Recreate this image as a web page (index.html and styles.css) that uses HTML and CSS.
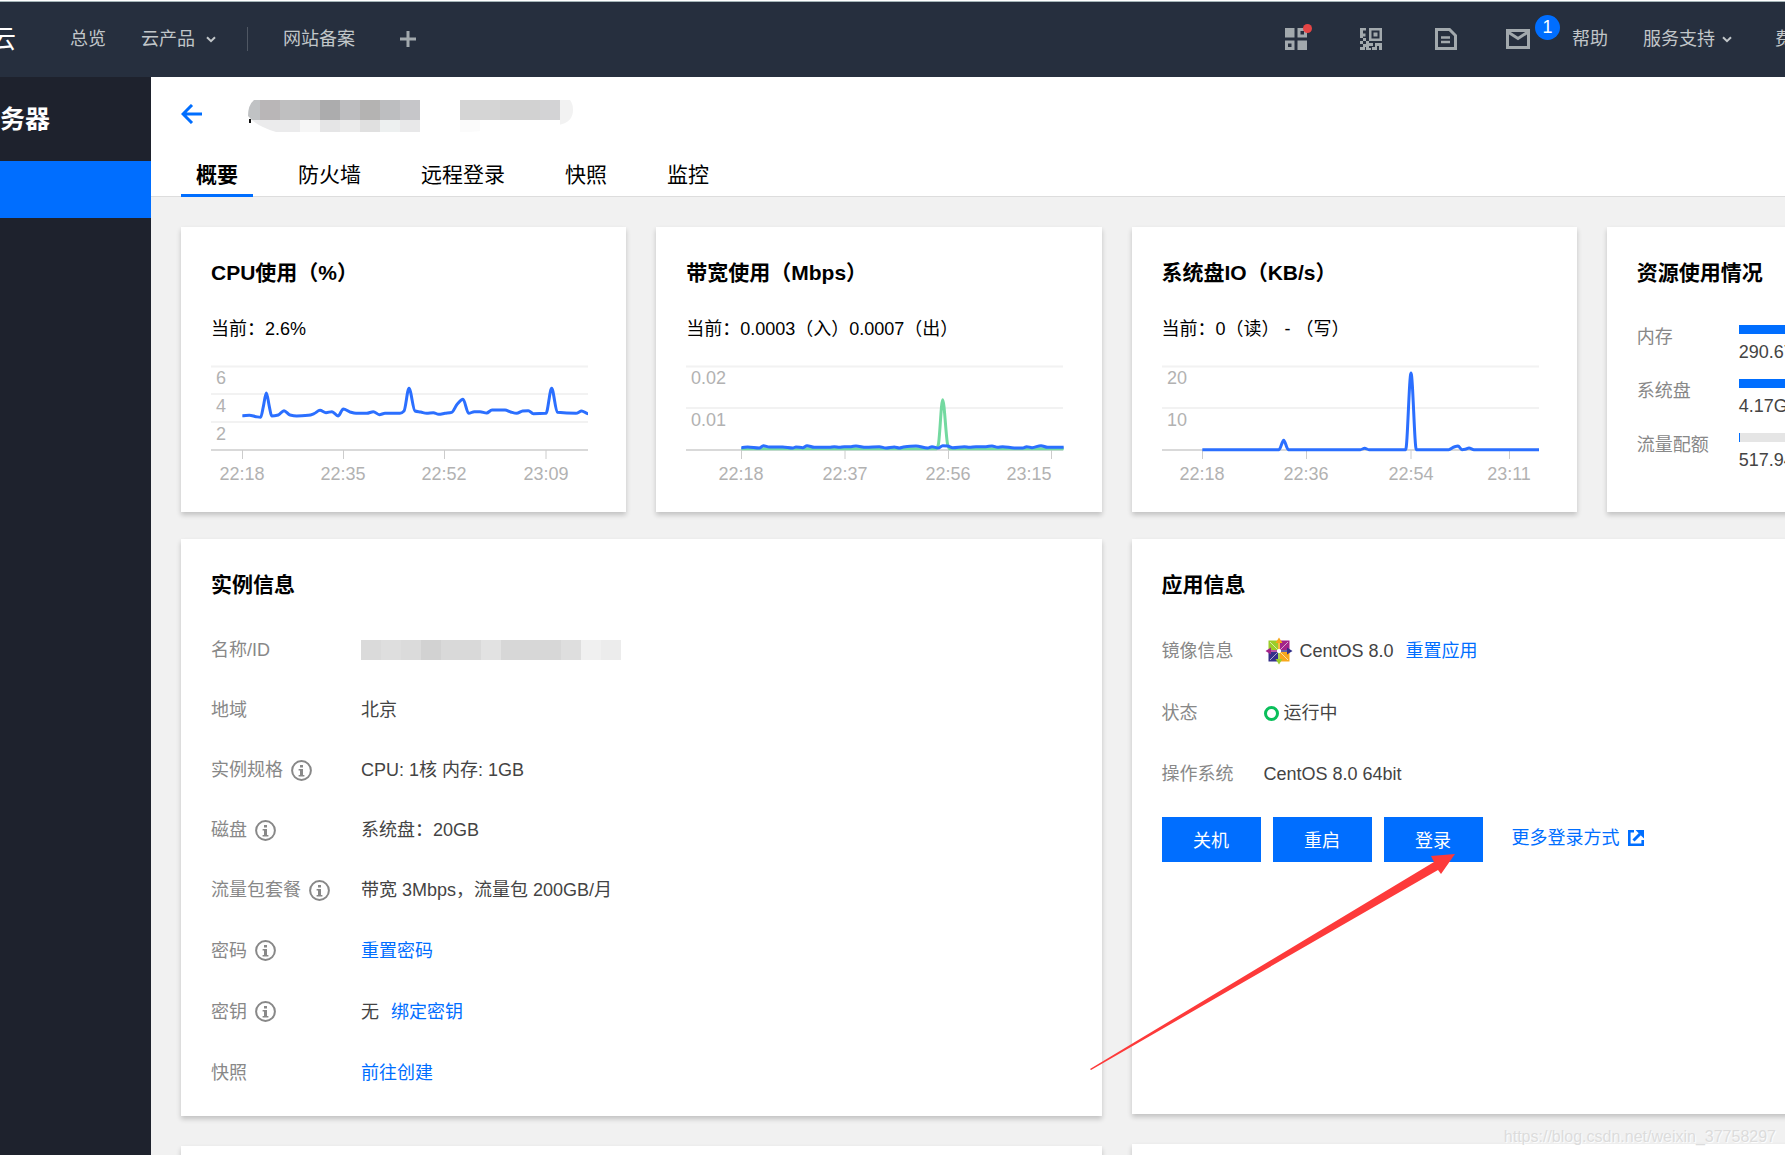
FILE: index.html
```html
<!DOCTYPE html>
<html lang="zh-CN">
<head>
<meta charset="utf-8">
<title>云服务器 - 概要</title>
<link rel="stylesheet" href="styles.css">
</head>
<body>
<svg class="defs" width="0" height="0" aria-hidden="true">
  <symbol id="info" viewBox="0 0 21 21">
    <circle cx="10.5" cy="10.5" r="9.4" fill="none" stroke="currentColor" stroke-width="2"/>
    <path d="M9 5h3v2.6H9zM7.6 9H12v6h1.4v1.6H7.6V15H9v-4.4H7.6z" fill="currentColor"/>
  </symbol>
  <symbol id="chevron" viewBox="0 0 10 7">
    <path d="M1 1.2l4 4 4-4" fill="none" stroke="currentColor" stroke-width="2"/>
  </symbol>
</svg>

<header class="topbar">
  <a class="brand" href="#">云</a>
  <nav class="nav-left">
    <a href="#">总览</a>
    <a class="with-chevron products" href="#">云产品<svg width="10" height="7"><use href="#chevron"/></svg></a>
    <span class="divider"></span>
    <a href="#">网站备案</a>
    <button class="add" type="button" aria-label="添加"><svg width="16" height="16" viewBox="0 0 16 16"><path d="M8 0v16M0 8h16" stroke="currentColor" stroke-width="3"/></svg></button>
  </nav>
  <nav class="nav-right">
    <button class="tool" type="button" aria-label="应用">
      <svg width="22" height="22" viewBox="0 0 22 22" fill="currentColor"><path fill-rule="evenodd" d="M0 0h9.500v9.500H0zM12.500 0H22v9.500h-9.500zM15.500 3v3.500H19V3zM0 12.500h9.500V22H0zM3 15.500V19h3.500v-3.500zM12.500 12.500H22V22h-9.500z"/></svg>
      <span class="dot"></span>
    </button>
    <button class="tool" type="button" aria-label="二维码">
      <svg width="22" height="22" viewBox="0 0 22 22" fill="currentColor"><path fill-rule="evenodd" d="M9 0h13v13H9zM11.500 2.500v8h8v-8zM13.500 4.500h4v4h-4zM0 0h6v2.500H3v3h2.500v3H3V10H0zM3 10h3v3H3zM0 13h3v3H0zM6 13h3v3H6zM3 16h6v-1h4v3H9v2h2v2H6v-3H5v3H0v-3h3zM15 15h7v7h-3v-4h-2v4h-5v-3h3z"/></svg>
    </button>
    <button class="tool" type="button" aria-label="文档">
      <svg width="22" height="22" viewBox="0 0 22 22" fill="none" stroke="currentColor" stroke-width="3"><path d="M1.500 1.500h13l6 6v13h-19z"/><path d="M6 9.500h9M6 14h9" stroke-width="2.600"/></svg>
    </button>
    <button class="tool mail" type="button" aria-label="消息">
      <svg width="24" height="20" viewBox="0 0 24 20" fill="none" stroke="currentColor" stroke-width="3"><path d="M1.500 1.500h21v17h-21z"/><path d="M2 3l10 6.500L22 3"/></svg>
      <span class="badge">1</span>
    </button>
    <a class="help" href="#">帮助</a>
    <a class="with-chevron support" href="#">服务支持<svg width="10" height="7"><use href="#chevron"/></svg></a>
    <a href="#">费用</a>
  </nav>
</header>

<div class="layout">
  <aside class="sidebar">
    <h1 class="sidebar-title">务器</h1>
    <a class="sidebar-item" href="#" aria-label="服务器"></a>
  </aside>

  <main class="main">
    <div class="page-head">
      <div class="crumb">
        <a class="back" href="#" aria-label="返回"><svg width="22" height="20" viewBox="0 0 22 20" fill="none" stroke="currentColor" stroke-width="3"><path d="M21 10H3M11 1l-9 9 9 9"/></svg></a>
        <svg class="mask" width="325" height="32" viewBox="0 0 325 32" aria-hidden="true">
          <defs>
            <clipPath id="m1"><path d="M6 0h166v32H28Q8 26 0 16 0 5 6 0z"/></clipPath>
            <clipPath id="m2"><path d="M212 0h110q3 4 3 10 0 12-14 15l-90 7h-9z"/></clipPath>
          </defs>
          <path d="M1 19h2v4H1z" fill="#111"/>
          <g clip-path="url(#m1)">
            <path d="M0 0h12v20H0z" fill="#c0c2c4"/><path d="M12 0h20v20H12z" fill="#b9b6b7"/><path d="M32 0h20v20H32z" fill="#bfbfc0"/><path d="M52 0h20v20H52z" fill="#bdbdbe"/><path d="M72 0h20v20H72z" fill="#acacad"/><path d="M92 0h20v20H92z" fill="#bebec0"/><path d="M112 0h20v20h-20z" fill="#b4b3b2"/><path d="M132 0h20v20h-20z" fill="#bdbec0"/><path d="M152 0h20v20h-20z" fill="#c6c6c9"/>
            <path d="M0 20h52v12H0z" fill="#ebebec"/><path d="M52 20h20v12H52z" fill="#f6f6f6"/><path d="M72 20h20v12H72z" fill="#e5e5e6"/><path d="M92 20h20v12H92z" fill="#ebebeb"/><path d="M112 20h20v12h-20z" fill="#e0e0e0"/><path d="M132 20h20v12h-20z" fill="#edf0f0"/><path d="M152 20h20v12h-20z" fill="#e8e8e9"/>
          </g>
          <g clip-path="url(#m2)">
            <path d="M212 0h40v20h-40z" fill="#d5d5d5"/><path d="M252 0h40v20h-40z" fill="#d2d2d2"/><path d="M292 0h20v20h-20z" fill="#d3d3d5"/><path d="M312 0h13v32h-13z" fill="#f2f2f2"/><path d="M212 20h20v12h-20z" fill="#fbfbfb"/>
          </g>
        </svg>
      </div>
      <nav class="tabs">
        <a class="tab active" href="#">概要</a>
        <a class="tab" href="#">防火墙</a>
        <a class="tab" href="#">远程登录</a>
        <a class="tab" href="#">快照</a>
        <a class="tab" href="#">监控</a>
      </nav>
    </div>

    <div class="content">
      <div class="metrics">
        <section class="card">
          <h2>CPU使用（%）</h2>
          <p class="current">当前：2.6%</p>
          <svg class="chart" width="377" height="130" viewBox="0 0 377 130">
            <path class="grid" d="M0 8.500h377M0 36h377M0 64h377"/>
            <path class="axis" d="M0 92h377"/>
            <path class="tick" d="M31.500 92v9M132.500 92v9M233.500 92v9M335 92v9"/>
            <path class="line" data-points="94,173 115,172 135,176 149,178 157,146 166,105 175,146 182,174 202,171 219,158 237,171 257,174 292,172 309,167 327,157 345,164 363,161 381,174 397,153 417,162 435,166 467,166 487,161 505,170 522,166 567,166 579,159 594,91 612,159 629,162 647,166 667,164 683,169 702,166 722,163 739,138 756,124 773,166 790,161 807,161 827,165 843,156 882,156 899,162 917,166 935,159 952,158 967,167 1005,166 1022,91 1039,163 1095,166 1112,159 1131,167"/>
            <g class="ylabel"><text x="5" y="26">6</text><text x="5" y="54">4</text><text x="5" y="82">2</text></g>
            <g class="xlabel"><text x="31" y="122">22:18</text><text x="132" y="122">22:35</text><text x="233" y="122">22:52</text><text x="335" y="122">23:09</text></g>
          </svg>
        </section>

        <section class="card">
          <h2>带宽使用（Mbps）</h2>
          <p class="current">当前：0.0003（入）0.0007（出）</p>
          <svg class="chart" width="377" height="130" viewBox="0 0 377 130">
            <path class="grid" d="M0 8.500h377M0 50h377"/>
            <path class="axis" d="M0 92h377"/>
            <path class="tick" d="M55.500 92v9M159 92v9M262.500 92v9M365.500 92v9"/>
            <path class="line green" data-points="166,272 752,272 757,260 770,125 785,260 790,272 1133,272"/>
            <path class="line" data-points="166,269 185,267 220,270 232,263 250,267 290,267 320,270 330,267 350,269 363,263 385,268 430,268 445,266 460,268 475,266 495,266 510,264 540,268 580,266 600,270 625,267 640,270 652,267 690,264 725,270 738,266 757,270 770,263 785,264 800,269 835,266 850,268 870,266 900,266 918,264 935,268 950,266 985,270 1010,270 1022,266 1038,269 1065,263 1085,268 1133,268"/>
            <g class="ylabel"><text x="5" y="26">0.02</text><text x="5" y="68">0.01</text></g>
            <g class="xlabel"><text x="55" y="122">22:18</text><text x="159" y="122">22:37</text><text x="262" y="122">22:56</text><text x="343" y="122">23:15</text></g>
          </svg>
        </section>

        <section class="card">
          <h2>系统盘IO（KB/s）</h2>
          <p class="current">当前：0（读） - （写）</p>
          <svg class="chart" width="377" height="130" viewBox="0 0 377 130">
            <path class="grid" d="M0 8.500h377M0 50h377"/>
            <path class="axis" d="M0 92h377"/>
            <path class="tick" d="M40.500 92v9M144.500 92v9M249 92v9M347.500 92v9"/>
            <path class="line" data-points="121,275 351,275 365,247 379,275 595,275 608,271 621,275 731,275 747,45 763,275 860,275 876,267 888,264 900,275 910,274 921,270 936,275 1131,275"/>
            <g class="ylabel"><text x="5" y="26">20</text><text x="5" y="68">10</text></g>
            <g class="xlabel"><text x="40" y="122">22:18</text><text x="144" y="122">22:36</text><text x="249" y="122">22:54</text><text x="347" y="122">23:11</text></g>
          </svg>
        </section>

        <section class="card">
          <h2>资源使用情况</h2>
          <dl class="usage">
            <dt>内存</dt><dd><div class="bar"><div class="fill" style="width:35%"></div></div>290.67MB</dd>
            <dt>系统盘</dt><dd><div class="bar"><div class="fill" style="width:21%"></div></div>4.17GB</dd>
            <dt>流量配额</dt><dd><div class="bar"><div class="fill" style="width:0.3%"></div></div>517.94MB</dd>
          </dl>
        </section>
      </div>

      <div class="details">
        <div class="column">
          <section class="card">
            <h2>实例信息</h2>
            <dl class="rows instance">
              <div class="row"><dt>名称/ID</dt><dd>
                <svg class="mask-id" width="260" height="20" viewBox="0 0 260 20" aria-hidden="true"><path d="M0 0h20v20H0z" fill="#dadada"/><path d="M20 0h20v20H20z" fill="#dedede"/><path d="M40 0h20v20H40z" fill="#dbdbdb"/><path d="M60 0h20v20H60z" fill="#d2d2d2"/><path d="M80 0h40v20H80z" fill="#d9d9d9"/><path d="M120 0h20v20h-20z" fill="#e2e2e2"/><path d="M140 0h60v20h-60z" fill="#d7d7d7"/><path d="M200 0h20v20h-20z" fill="#dedede"/><path d="M220 0h20v20h-20z" fill="#f0f0f0"/><path d="M240 0h20v20h-20z" fill="#ececec"/></svg></dd></div>
              <div class="row"><dt>地域</dt><dd>北京</dd></div>
              <div class="row"><dt>实例规格<svg width="21" height="21"><use href="#info"/></svg></dt><dd>CPU: 1核 内存: 1GB</dd></div>
              <div class="row"><dt>磁盘<svg width="21" height="21"><use href="#info"/></svg></dt><dd>系统盘：20GB</dd></div>
              <div class="row"><dt>流量包套餐<svg width="21" height="21"><use href="#info"/></svg></dt><dd>带宽 3Mbps，流量包 200GB/月</dd></div>
              <div class="row linked"><dt>密码<svg width="21" height="21"><use href="#info"/></svg></dt><dd><a href="#">重置密码</a></dd></div>
              <div class="row linked"><dt>密钥<svg width="21" height="21"><use href="#info"/></svg></dt><dd>无<a href="#">绑定密钥</a></dd></div>
              <div class="row linked"><dt>快照</dt><dd><a href="#">前往创建</a></dd></div>
            </dl>
          </section>
          <section class="card next"></section>
        </div>

        <div class="column">
          <section class="card app">
            <h2>应用信息</h2>
            <dl class="rows application">
              <div class="row"><dt>镜像信息</dt><dd>
                <svg class="centos" width="30" height="28" viewBox="-15 -14 30 28" aria-hidden="true">
                  <path d="M-10.500-10.500H-1V-1H-10.500z" fill="#9ccd2a"/><path d="M1-10.500H10.500V-1H1z" fill="#a3238a"/><path d="M-10.500 1H-1V10.500H-10.500z" fill="#34318a"/><path d="M1 1H10.500V10.500H1z" fill="#f8a81c"/>
                  <path d="M-9-9L9 9M9-9L-9 9" fill="none" stroke="#fff" stroke-width="1" opacity=".6"/>
                  <path d="M-.8-2v-6H-3.500L0-13.500 3.500-8H.8v6z" fill="#f8a81c"/><path d="M2-.8h6V-3.500L13.500 0 8 3.500V.8H2z" fill="#34318a"/><path d="M-.8 2v6H-3.500L0 13.500 3.500 8H.8V2z" fill="#9ccd2a"/><path d="M-2-.8h-6V-3.500L-13.500 0-8 3.500V.8h6z" fill="#a3238a"/>
                </svg><span class="image-name">CentOS 8.0</span><a href="#">重置应用</a></dd></div>
              <div class="row"><dt>状态</dt><dd><span class="ring"></span>运行中</dd></div>
              <div class="row"><dt>操作系统</dt><dd>CentOS 8.0 64bit</dd></div>
            </dl>
            <div class="actions">
              <button type="button">关机</button>
              <button type="button">重启</button>
              <button type="button">登录</button>
              <a class="more" href="#">更多登录方式<svg width="16" height="16" viewBox="0 0 16 16" fill="none" stroke="currentColor" stroke-width="2.600"><path d="M6 1.300H1.300v13.400h13.400V10"/><path d="M5.500 10.500L12 4" stroke-width="3"/><path d="M7.500 0H16v8.500z" fill="currentColor" stroke="none"/></svg></a>
            </div>
            <svg class="pointer" width="366" height="216" viewBox="0 0 366 216" aria-hidden="true"><path d="M0 215L344 8 341 2 365 0 351 20 348 16 1 216z" fill="#fd3a3a"/></svg>
          </section>
          <section class="card next"></section>
        </div>
      </div>
    </div>
  </main>
</div>
<div class="watermark">https://blog.csdn.net/weixin_37758297</div>
<script src="charts.js"></script>
</body>
</html>
```

FILE: styles.css
```css
* { box-sizing: border-box; }

body {
  margin: 0;
  height: 100vh;
  display: flex;
  flex-direction: column;
  overflow: hidden;
  background: #f1f1f1;
  color: #444;
  font: 18px/24px "Liberation Sans", "Noto Sans CJK SC", sans-serif;
}

h1, h2, p, dl, dd { margin: 0; }
a { color: #006eff; text-decoration: none; white-space: nowrap; }
button { border: 0; padding: 0; font: inherit; background: none; cursor: pointer; }
svg { display: block; flex: none; }
.defs { position: absolute; }

/* top bar */
.topbar {
  flex: none;
  height: 77px;
  display: flex;
  align-items: center;
  border-top: 1px solid #fff;
  box-shadow: inset 0 1px #a5b5b8;
  background: #262f3e;
  color: #a2a9ad;
}
.topbar a { color: #c1c6c9; }
.topbar .brand {
  width: 16px;
  margin-right: 54px;
  display: flex;
  justify-content: flex-end;
  overflow: hidden;
  color: #fff;
  font-size: 26px;
  line-height: 32px;
}
.nav-left, .nav-right, .with-chevron { display: flex; align-items: center; }
.nav-left { gap: 35px; }
.products { gap: 11px; }
.products + .divider { margin-left: -4px; }
.divider { width: 1px; height: 24px; background: #4f5763; }
.add { margin-left: 10px; color: #a2a9ad; }
.nav-right { margin-left: auto; margin-right: -26px; }
.tool { position: relative; color: #a2a9ad; margin-right: 53px; }
.tool.mail { margin: 0 42px 0 -4px; }
.dot {
  position: absolute;
  top: -4px;
  right: -5px;
  width: 9px;
  height: 9px;
  border-radius: 50%;
  background: #e54545;
}
.badge {
  position: absolute;
  top: -14px;
  left: 29px;
  width: 25px;
  height: 25px;
  border-radius: 50%;
  background: #006eff;
  color: #fff;
  line-height: 24px;
}
.help { margin-right: 35px; }
.support { gap: 7px; margin-right: 43px; }

/* frame */
.layout { flex: 1; min-height: 0; display: flex; }
.sidebar { flex: none; width: 151px; background: #1e222d; }
.sidebar-title {
  height: 84px;
  overflow: hidden;
  color: #fff;
  font-size: 25px;
  line-height: 84px;
}
.sidebar-item { display: block; height: 57px; background: #006eff; }
.main { flex: 1; min-width: 0; overflow: hidden; }

.page-head {
  padding: 23px 30px 0;
  background: #fff;
  border-bottom: 1px solid #ddd;
}
.crumb { height: 32px; display: flex; gap: 45px; }
.back { padding-top: 4px; }
.tabs { display: flex; gap: 30px; margin-top: 23px; }
.tab {
  height: 42px;
  margin-bottom: -1px;
  padding: 0 15px;
  border-bottom: 3px solid transparent;
  color: #000;
  font-size: 21px;
  line-height: 40px;
}
.tab.active { border-color: #006eff; font-weight: bold; }

.content { width: calc(100% + 267px); padding: 30px 0 0 30px; }
.metrics { display: grid; grid-template-columns: repeat(4, 1fr); gap: 30px; }
.details { display: grid; grid-template-columns: 1fr 1fr; gap: 30px; margin-top: 27px; }
.column { display: flex; flex-direction: column; gap: 30px; }

.card {
  position: relative;
  padding: 30px 30px 24px;
  background: #fff;
  box-shadow: 0 3px 5px rgba(0, 0, 0, .2);
}
.card.next { height: 200px; }
.card h2 { color: #000; font-size: 21px; line-height: 32px; white-space: nowrap; }
.current { margin: 28px 0 17px; color: #000; white-space: pre; }

/* charts */
.chart { overflow: visible; }
.grid { fill: none; stroke: #f2f2f2; stroke-width: 2; }
.axis { fill: none; stroke: #d9d9d9; stroke-width: 2; }
.tick { stroke: #ccc; }
.line { fill: none; stroke: #2b6fff; stroke-width: 3; stroke-linejoin: round; }
.line.green { stroke: #74d9a0; }
.chart text { fill: #b2b2b2; }
.xlabel { text-anchor: middle; }

/* resource usage */
.usage { display: grid; grid-template-columns: 102px 1fr; row-gap: 15px; margin-top: 36px; }
dt { color: #888; white-space: nowrap; }
.bar { height: 9px; margin-bottom: 6px; background: #e5e5e5; }
.fill { height: 100%; background: #006eff; }

/* key/value rows */
.rows { margin-top: 19px; }
.row { display: flex; align-items: center; height: 60px; }
.row dt, .row dd { display: flex; align-items: center; }
.row dt { gap: 8px; }
.instance .row dt { width: 150px; }
.instance .linked { height: 61px; }
.instance { margin-bottom: -11px; }
.instance dd { gap: 12px; }
.application .row { height: 62px; }
.application .row:last-child { height: 60px; }
.application .row dt { width: 102px; }
.image-name { margin: 0 12px 0 6px; }
.ring {
  width: 15px;
  height: 15px;
  margin-right: 5px;
  border: 3px solid #0abf5b;
  border-radius: 50%;
}

.app { min-height: 575px; }
.actions { display: flex; gap: 12px; margin-top: 13px; }
.actions button { width: 99px; height: 45px; padding-top: 2px; background: #006eff; color: #fff; }
.more { display: flex; align-items: center; gap: 8px; height: 42px; margin-left: 17px; }

.pointer { position: absolute; left: -42px; top: 315px; z-index: 1; }
.watermark {
  position: absolute;
  right: 9px;
  bottom: 6px;
  color: #dcdcdc;
  font-size: 16px;
  text-shadow: 1px 1px 1px #fff;
}
```

FILE: charts.js
```js
// Turns each data-points list (thirds of a pixel) into a smooth path.
document.querySelectorAll('.line').forEach(function (el) {
  var p = el.dataset.points.split(' ').map(function (s) {
    return s.split(',').map(function (v) { return v / 3; });
  });
  function slope(i) {
    if (i === 0 || i === p.length - 1) return 0;
    var a = (p[i][1] - p[i - 1][1]) / (p[i][0] - p[i - 1][0]);
    var b = (p[i + 1][1] - p[i][1]) / (p[i + 1][0] - p[i][0]);
    return a * b <= 0 ? 0 : 2 * a * b / (a + b);
  }
  var d = 'M' + p[0];
  for (var i = 1; i < p.length; i++) {
    var h = (p[i][0] - p[i - 1][0]) / 3;
    d += 'C' + [p[i - 1][0] + h, p[i - 1][1] + h * slope(i - 1),
      p[i][0] - h, p[i][1] - h * slope(i), p[i][0], p[i][1]];
  }
  el.setAttribute('d', d);
});
```
